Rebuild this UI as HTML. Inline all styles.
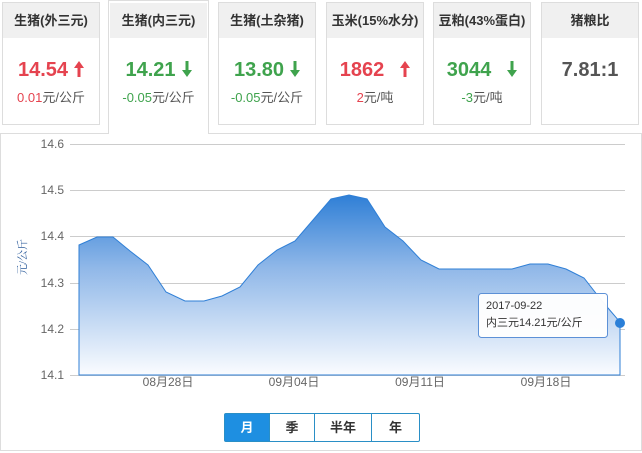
<!DOCTYPE html>
<html><head><meta charset="utf-8"><style>
*{margin:0;padding:0;box-sizing:border-box}
body{width:642px;height:453px;background:#fff;font-family:"Liberation Sans","Noto Sans CJK SC",sans-serif;position:relative;overflow:hidden}
.card{position:absolute;top:2px;width:98px;height:123px;border:1px solid #ddd;background:#fff;text-align:center}
.card .h{height:35px;background:#f0f0f0;line-height:35px;font-size:13px;color:#333;font-weight:bold}
.card .v{margin-top:20px;font-size:20px;font-weight:bold;line-height:24px}
.card .d{margin-top:5px;font-size:13px;color:#555}
.r{color:#e5434f}.g{color:#3fa34d}
.panel{position:absolute;left:0;top:133px;width:642px;height:318px;border:1px solid #ddd}
.actw{position:absolute;left:108px;top:0;width:101px;height:134px;border:1px solid #ddd;border-bottom:none;background:#fff;z-index:1}
.act{z-index:2;border-color:transparent}
.ar{display:inline-block;vertical-align:-1px;margin-left:6px}
.btns{position:absolute;left:224px;top:413px;height:29px;display:flex;border:1px solid #2a8fc6;border-radius:2px}
.btns div{text-align:center;line-height:27px;font-size:13px;color:#333;border-left:1px solid #2a8fc6;font-weight:bold}
.btns div:first-child{border-left:none;background:#1e8fe1;color:#fff}
</style></head><body>
<div class="panel"></div>
<div class="actw"></div>
<svg width="0" height="0" style="position:absolute"><defs>
<symbol id="up" viewBox="0 0 10 16"><path d="M5,0 L10,7 L6.5,7 L6.5,16 L3.5,16 L3.5,7 L0,7 Z"/></symbol>
<symbol id="dn" viewBox="0 0 10 16"><path d="M5,16 L10,9 L6.5,9 L6.5,0 L3.5,0 L3.5,9 L0,9 Z"/></symbol>
</defs></svg>
<div class="card" style="left:2px"><div class="h">生猪(外三元)</div><div class="v r">14.54<svg class="ar" width="10" height="16" fill="#e5434f"><use href="#up"/></svg></div><div class="d"><span class="r">0.01</span>元/公斤</div></div>
<div class="card act" style="left:109px;width:99px"><div class="h">生猪(内三元)</div><div class="v g">14.21<svg class="ar" width="10" height="16" fill="#3fa34d"><use href="#dn"/></svg></div><div class="d"><span class="g">-0.05</span>元/公斤</div></div>
<div class="card" style="left:218px"><div class="h">生猪(土杂猪)</div><div class="v g">13.80<svg class="ar" width="10" height="16" fill="#3fa34d"><use href="#dn"/></svg></div><div class="d"><span class="g">-0.05</span>元/公斤</div></div>
<div class="card" style="left:326px"><div class="h">玉米(15%水分)</div><div class="v r">1862<svg class="ar" style="margin-left:16px" width="10" height="16" fill="#e5434f"><use href="#up"/></svg></div><div class="d"><span class="r">2</span>元/吨</div></div>
<div class="card" style="left:433px"><div class="h">豆粕(43%蛋白)</div><div class="v g">3044<svg class="ar" style="margin-left:16px" width="10" height="16" fill="#3fa34d"><use href="#dn"/></svg></div><div class="d"><span class="g">-3</span>元/吨</div></div>
<div class="card" style="left:541px"><div class="h">猪粮比</div><div class="v" style="color:#555">7.81:1</div></div>
<svg style="position:absolute;left:0;top:0" width="642" height="453">
<defs><linearGradient id="gr" x1="0" y1="0" x2="0" y2="1"><stop offset="0" stop-color="#2f7fd6"/><stop offset="0.4" stop-color="#8fb7e8"/><stop offset="1" stop-color="#fafcff"/></linearGradient></defs>
<g stroke="#ccc" stroke-width="1">
<line x1="70" y1="144.5" x2="625" y2="144.5"/><line x1="70" y1="190.5" x2="625" y2="190.5"/><line x1="70" y1="236.5" x2="625" y2="236.5"/><line x1="70" y1="283.5" x2="625" y2="283.5"/><line x1="70" y1="329.5" x2="625" y2="329.5"/><line x1="70" y1="375.5" x2="625" y2="375.5"/>
</g>
<path d="M79,245 L97,237 L113,237 L130,251 L148,265 L166,292 L185,301 L204,301 L222,296 L240,287 L258,265 L277,250 L295,241 L313,220 L331,199 L349,195 L367,199 L385,227 L403,241 L421,260 L439,269 L457,269 L476,269 L494,269 L512,269 L530,264 L548,264 L566,269 L584,278 L602,301 L620,322 L620,375 L79,375 Z" fill="url(#gr)" stroke="#2f7fd6" stroke-width="1"/>
<circle cx="620" cy="323" r="5" fill="#2a7fd8"/>
<g font-size="12" fill="#666" text-anchor="end"><text x="64" y="148">14.6</text><text x="64" y="194">14.5</text><text x="64" y="240">14.4</text><text x="64" y="287">14.3</text><text x="64" y="333">14.2</text><text x="64" y="379">14.1</text></g>
<g font-size="12" fill="#666" text-anchor="middle"><text x="168" y="386">08月28日</text><text x="294" y="386">09月04日</text><text x="420" y="386">09月11日</text><text x="546" y="386">09月18日</text></g>
<text transform="translate(26,257) rotate(-90)" font-size="11" fill="#2a5a9a" text-anchor="middle" font-family="Liberation Serif,Noto Serif CJK SC,serif">元/公斤</text>
<rect x="478.5" y="293.5" width="129" height="44" rx="3" fill="#fff" stroke="#5a8fd6" opacity="0.97"/>
<text x="486" y="309" font-size="11" fill="#333">2017-09-22</text>
<text x="486" y="326" font-size="11" fill="#333">内三元14.21元/公斤</text>
</svg>
<div class="btns"><div style="width:44px">月</div><div style="width:45px">季</div><div style="width:57px">半年</div><div style="width:48px">年</div></div>
</body></html>
